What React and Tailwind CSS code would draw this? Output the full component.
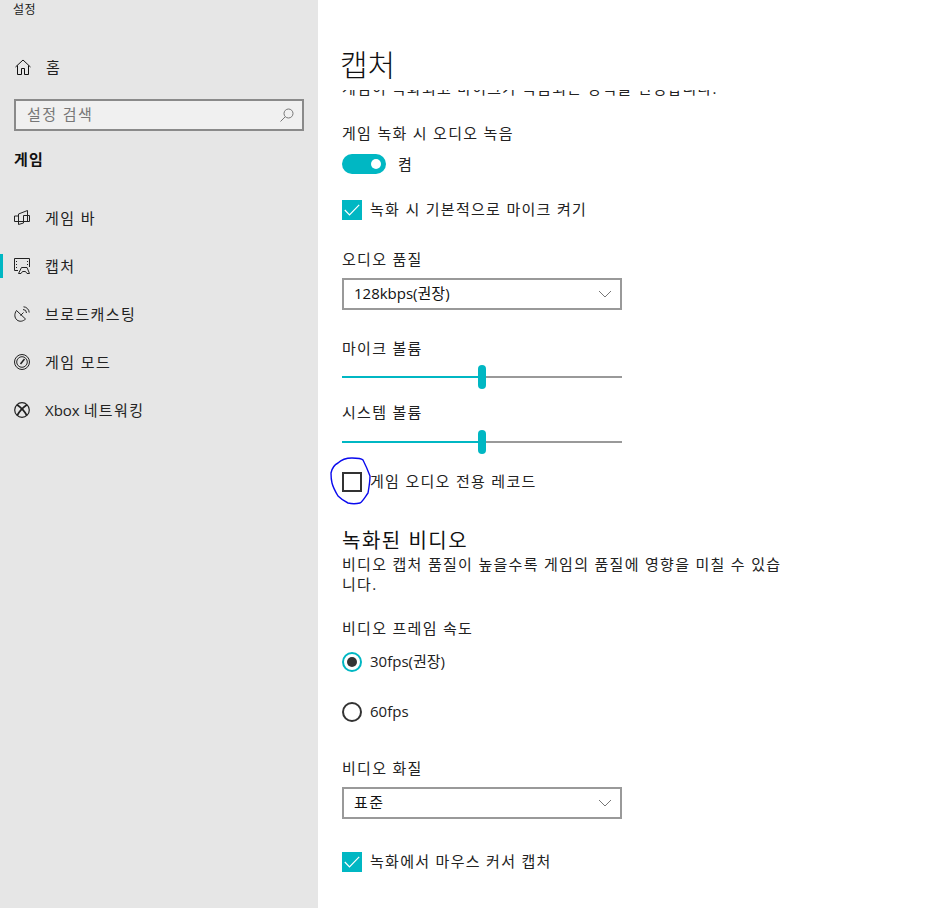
import React from 'react';

const font = "font-['Open_Sans','Noto_Sans_CJK_KR',sans-serif]";

const HomeIcon = () => (
  <svg width="16" height="16" viewBox="0 0 16 16" fill="none" stroke="#111" strokeWidth="1">
    <path d="M0.5 8 L8 1 L15.5 8" />
    <path d="M2.5 6.5 V15.5 H6.5 V9.5 H9.5 V15.5 H13.5 V6.5" />
  </svg>
);

const GameBarIcon = () => (
  <svg width="16" height="16" viewBox="0 0 16 16" fill="none" stroke="#222" strokeWidth="1">
    <path d="M4.5 4 L13.5 0.5 V11.5" />
    <path d="M4.5 4 V14.5 L9.5 13 V5.5 H15.5 V11.5 H0.5 V6 H4.5" />
  </svg>
);

const CaptureIcon = () => (
  <svg width="16" height="16" viewBox="0 0 16 16" fill="none" stroke="#222" strokeWidth="1">
    <path d="M4 12.5 H0.5 V0.5 H15.5 V9" />
    <path d="M2.5 3 V4 M2.5 6 V7 M2.5 9 V10 M13.5 3 V4 M13.5 6 V7" />
    <path d="M7.5 9.5 H13 L15.5 15.5 H13 L11.5 13.5 H8.5 L7 15.5 H4.5 Z" />
  </svg>
);

const BroadcastIcon = () => (
  <svg width="16" height="16" viewBox="0 0 16 16" fill="none" stroke="#222" strokeWidth="1">
    <path d="M2.5 4.5 C0 8 0.5 12 3 14 C5.5 16 9 15.5 11.5 13 Z" />
    <path d="M6.5 9.5 L9.5 6.5" />
    <path d="M9 3.5 A3.5 3.5 0 0 1 12.5 7" />
    <path d="M9.5 0.8 A6 6 0 0 1 15.2 6.5" />
  </svg>
);

const GameModeIcon = () => (
  <svg width="16" height="16" viewBox="0 0 16 16" fill="none" stroke="#222" strokeWidth="1">
    <circle cx="8" cy="8" r="7.5" />
    <circle cx="8" cy="8" r="5.3" />
    <path d="M6.5 10 L10.5 5" strokeWidth="1.5" />
  </svg>
);

const XboxIcon = () => (
  <svg width="16" height="16" viewBox="0 0 16 16" fill="none" stroke="#222">
    <circle cx="8" cy="8" r="7.3" strokeWidth="1.2" />
    <path d="M3 2.8 C7 5.5 11 10 12.8 13.5" strokeWidth="1.7" />
    <path d="M13 2.8 C9 5.5 5 10 3.2 13.5" strokeWidth="1.7" />
  </svg>
);

const NavItem = ({ icon, label, active }) => (
  <div className="relative h-12 flex items-center pl-[14px]">
    {active && <div className="absolute left-0 top-3 w-[3px] h-6 bg-[#00b7c3]" />}
    <span className="w-4 h-4 flex">{icon}</span>
    <span className="ml-[15px] text-[15px] text-[#222]">{label}</span>
  </div>
);

const Check = ({ checked, label }) => (
  <div className="flex items-center h-5">
    {checked ? (
      <div className="w-5 h-5 bg-[#00b7c3] flex items-center justify-center">
        <svg width="16" height="12" viewBox="0 0 16 12" fill="none" stroke="#fff" strokeWidth="1.2">
          <path d="M0.8 6 L5.5 10.8 L15.2 0.8" />
        </svg>
      </div>
    ) : (
      <div className="w-5 h-5 border-2 border-[#333]" />
    )}
    <span className="ml-2 pb-[2px] text-[15px] tracking-[1.3px] text-[#222]">{label}</span>
  </div>
);

const Dropdown = ({ children }) => (
  <div className="w-[280px] h-8 border-2 border-[#999] flex items-center justify-between pl-[10px] pr-2 bg-white">
    <span className="pb-[2px] text-[15px] text-[#111]">{children}</span>
    <svg width="14" height="8" viewBox="0 0 14 8" fill="none" stroke="#777" strokeWidth="1">
      <path d="M1 1 L7 7 L13 1" />
    </svg>
  </div>
);

const Slider = () => (
  <div className="relative w-[280px] h-6 flex items-center">
    <div className="w-[140px] h-[2px] bg-[#00b7c3]" />
    <div className="w-[140px] h-[2px] bg-[#999]" />
    <div className="absolute left-[136px] top-0 w-2 h-6 rounded-full bg-[#00b7c3]" />
  </div>
);

const Radio = ({ checked, label }) => (
  <div className="flex items-center h-5">
    <div className={checked
      ? 'w-5 h-5 rounded-full border-2 border-[#00b7c3] flex items-center justify-center'
      : 'w-5 h-5 rounded-full border-2 border-[#333]'}>
      {checked && <div className="w-[10px] h-[10px] rounded-full bg-[#333]" />}
    </div>
    <span className="ml-2 pb-px text-[15px] text-[#222]">{label}</span>
  </div>
);

const Label = ({ children, className }) => (
  <div className={`h-5 leading-5 text-[15px] tracking-[1.3px] text-[#222] ${className}`}>{children}</div>
);

const k = (text) => <span className="tracking-[1.4px]">{text}</span>;

export default function App() {
  return (
    <div className={`flex w-[947px] h-[908px] overflow-hidden bg-white ${font}`}>
      <aside className="w-[318px] shrink-0 bg-[#e6e6e6]">
        <div className="h-[21px] pl-[13px] text-[12px] leading-5 tracking-[0.5px] text-[#222]">설정</div>
        <div className="mt-[22px] h-12 flex items-center pl-[15px]">
          <HomeIcon />
          <span className="ml-[15px] text-[15px] text-[#222]">홈</span>
        </div>
        <div className="mx-[14px] mt-2 h-8 border-2 border-[#8a8a8a] bg-[#f0f0f0] flex items-center justify-between pl-[11px] pr-2">
          <span className="pb-[2px] text-[15px] tracking-[1.4px] text-[#777]">설정 검색</span>
          <svg width="14" height="14" viewBox="0 0 14 14" fill="none" stroke="#777" strokeWidth="1">
            <circle cx="8.5" cy="5.5" r="4.5" />
            <path d="M5.2 8.8 L0.5 13.5" />
          </svg>
        </div>
        <div className="mt-[18px] pl-[14px] h-5 leading-5 text-[15px] font-bold tracking-[1.2px] text-[#111]">게임</div>
        <div className="mt-[25px]">
          <NavItem icon={<GameBarIcon />} label={k('게임 바')} />
          <NavItem icon={<CaptureIcon />} label={k('캡처')} active />
          <NavItem icon={<BroadcastIcon />} label={k('브로드캐스팅')} />
          <NavItem icon={<GameModeIcon />} label={k('게임 모드')} />
          <NavItem icon={<XboxIcon />} label={<>Xbox {k('네트워킹')}</>} />
        </div>
      </aside>

      <main className="flex-1 min-w-0">
        <div className="h-[90px] pt-[45px] pl-6">
          <h1 className="-ml-[2px] text-[30px] leading-[40px] font-light text-[#111]">캡처</h1>
        </div>
        <div className="h-[818px] overflow-hidden relative pl-6">
          <div className="-mt-[12px] h-5 leading-5 text-[15px] tracking-[1.2px] text-[#222]">게임이 녹화되고 마이크가 녹음되는 방식을 변경합니다.</div>
          <Label className="mt-[25px]">게임 녹화 시 오디오 녹음</Label>
          <div className="mt-[11px] flex items-center h-5">
            <div className="w-11 h-5 rounded-full bg-[#00b7c3] flex items-center justify-end pr-[5px]">
              <div className="w-[10px] h-[10px] rounded-full bg-white" />
            </div>
            <span className="ml-3 text-[15px] text-[#222]">켬</span>
          </div>
          <div className="mt-[26px]"><Check checked label="녹화 시 기본적으로 마이크 켜기" /></div>
          <Label className="mt-[29px]">오디오 품질</Label>
          <div className="mt-[9px]"><Dropdown>128kbps(권장)</Dropdown></div>
          <Label className="mt-[28px]">마이크 볼륨</Label>
          <div className="mt-[7px]"><Slider /></div>
          <Label className="mt-[13px]">시스템 볼륨</Label>
          <div className="mt-[8px]"><Slider /></div>
          <div className="mt-[18px]"><Check label="게임 오디오 전용 레코드" /></div>
          <svg className="absolute left-[12px] top-[367px]" width="42" height="48" viewBox="0 0 42 48" fill="none" stroke="#0a0aee" strokeWidth="1.4">
            <path d="M1 16 C2 11 4 8 8 6 C12 2 17 1 22 1 C27 1 31 1 33 3 C35 7 37 11 40 19 C40 25 39 30 38 36 C35 40 33 44 30 46 C26 47 22 47 18 46 C14 44 11 42 8 39 C5 34 3 30 2 26 C1 22 1 19 1 16 Z" />
          </svg>
          <h2 className="mt-[35px] text-[20px] leading-7 font-normal tracking-[1.5px] text-[#111]">녹화된 비디오</h2>
          <p className="w-[445px] -mt-px break-all text-[15px] leading-5 tracking-[1.3px] text-[#222]">비디오 캡처 품질이 높을수록 게임의 품질에 영향을 미칠 수 있습니다.</p>
          <Label className="mt-[24px]">비디오 프레임 속도</Label>
          <div className="mt-[14px]"><Radio checked label="30fps(권장)" /></div>
          <div className="mt-[30px]"><Radio label="60fps" /></div>
          <Label className="mt-[36px]">비디오 화질</Label>
          <div className="mt-[9px]"><Dropdown>{k('표준')}</Dropdown></div>
          <div className="mt-[33px]"><Check checked label="녹화에서 마우스 커서 캡처" /></div>
        </div>
      </main>
    </div>
  );
}
